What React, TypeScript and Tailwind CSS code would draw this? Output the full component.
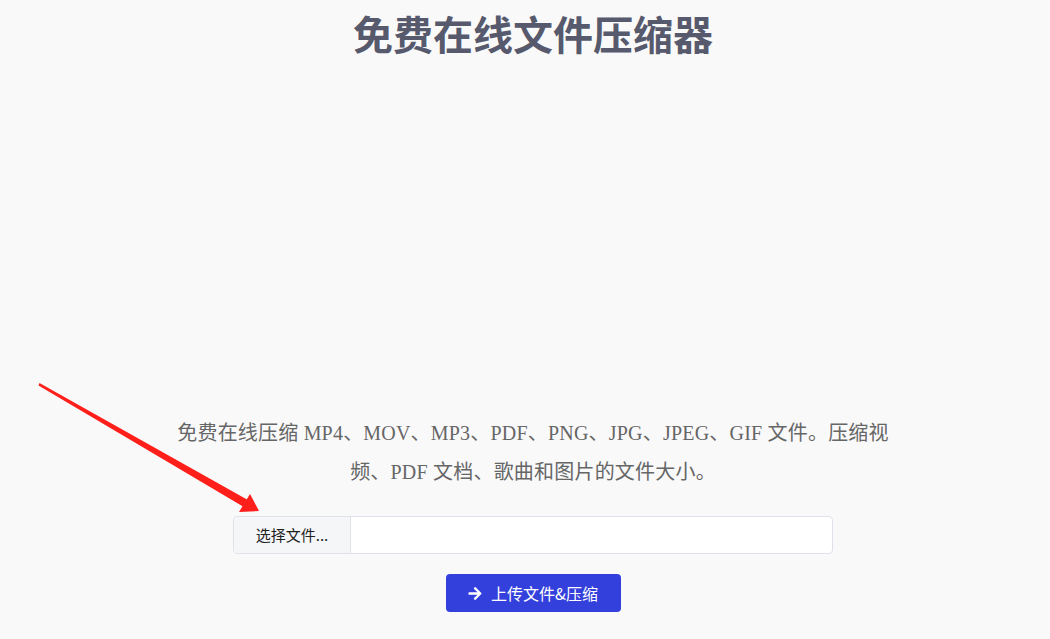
const SANS = { fontFamily: '"Noto Sans CJK SC", "Liberation Sans", sans-serif' };

function ArrowIcon() {
  return (
    <svg viewBox="0 0 448 512" className="h-[15px] w-[14px]" fill="currentColor">
      <path d="M190.5 66.9l22.2-22.2c9.4-9.4 24.6-9.4 33.9 0L441 239c9.4 9.4 9.4 24.6 0 33.9L246.6 467.3c-9.4 9.4-24.6 9.4-33.9 0l-22.2-22.2c-9.5-9.5-9.3-25 .4-34.3L311.4 296H24c-13.3 0-24-10.7-24-24v-32c0-13.3 10.7-24 24-24h287.4L190.9 101.2c-9.8-9.3-10-24.8-.4-34.3z" />
    </svg>
  );
}

export default function App() {
  return (
    <div className="relative min-h-[639px] w-full overflow-hidden bg-[#f9f9fa]">
      <div className="flex flex-col items-center pl-[16px]">
        <h1
          className="mt-[5px] text-[40px] leading-[56px] font-bold text-[#575a6d]"
          style={SANS}
        >
          免费在线文件压缩器
        </h1>

        <div
          className="mt-[353px] w-[724px] text-center text-[20px] leading-[39px] tracking-[0.2px] text-[#666]"
          style={{ fontFamily: '"Liberation Serif", "Noto Sans CJK SC", serif' }}
        >
          免费在线压缩 MP4、MOV、MP3、PDF、PNG、JPG、JPEG、GIF 文件。压缩视频、PDF 文档、歌曲和图片的文件大小。
        </div>

        <div className="mt-[24px] flex h-[38px] w-[600px] rounded-[4px] border border-[#dfe2e8] bg-white" style={SANS}>
          <label className="flex w-[117px] items-center justify-center rounded-l-[4px] border-r border-[#dfe2e8] bg-[#f5f6f8] text-[15px] text-[#222]">
            选择文件...
          </label>
          <div className="flex-1" />
        </div>

        <button
          className="mt-[20px] flex h-[38px] w-[175px] items-center justify-center gap-[9px] rounded-[4px] bg-[#3340dc] text-[16px] text-white"
          style={SANS}
        >
          <ArrowIcon />
          上传文件&压缩
        </button>
      </div>

      {/* annotation arrow */}
      <svg className="pointer-events-none absolute left-0 top-0" width="1050" height="639">
        <path d="M39.5 383 L38.5 385.5 L243 506.5 L247 499.5 Z" fill="#ff1f1a" />
        <path d="M259 511 L250 494 L239 512 Z" fill="#ff1f1a" />
      </svg>
    </div>
  );
}
